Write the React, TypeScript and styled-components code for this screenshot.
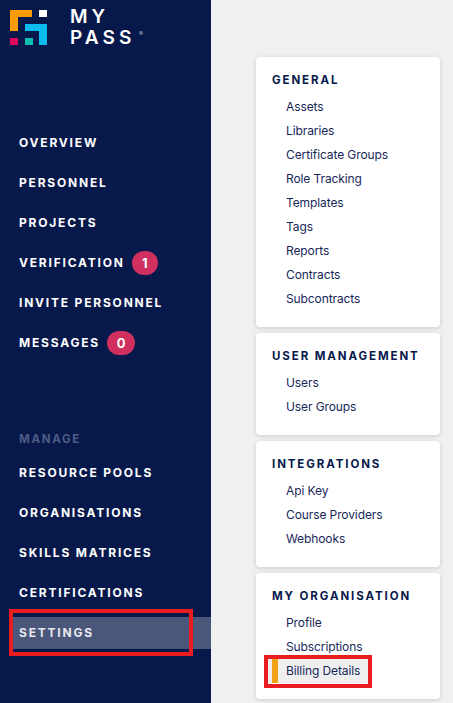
import React from "react";
import styled, { createGlobalStyle } from "styled-components";

const Global = createGlobalStyle`
  html, body { margin: 0; padding: 0; height: 100%; overflow: hidden; background: #f0f0f0; }
  #root { height: 100%; }
`;
const Page = styled.div`
  display: flex; width: 453px; height: 703px; overflow: hidden; position: relative;
  font-family: Inter, "Liberation Sans", sans-serif;
`;
const Sidebar = styled.aside`
  width: 211px; flex: none; background: #07194b; display: flex; flex-direction: column;
`;
const Brand = styled.div`
  display: flex; gap: 23px; padding: 10px 0 0 10px; height: 113px; box-sizing: border-box;
`;
const Wordmark = styled.div`
  color: #fff; font-size: 19px; font-weight: 600; letter-spacing: 4.1px; line-height: 21px;
  margin-top: -4px; position: relative; width: 80px;
  sup { position: absolute; left: 69px; top: 25px; font-size: 6px; line-height: 6px; letter-spacing: 0; color: #9aa3bb; }
`;
const NavGroup = styled.nav<{ $flush?: boolean }>`
  display: flex; flex-direction: column; padding-top: ${(p) => (p.$flush ? 0 : 10)}px;
`;
const NavItem = styled.div<{ $active?: boolean }>`
  height: 40px; box-sizing: border-box; padding: 0 0 1px 19px; display: flex; align-items: center; gap: 7px;
  color: #fff; font-size: 12px; font-weight: 700; letter-spacing: 1.8px; white-space: nowrap;
  position: relative;
  ${(p) => p.$active && `
    color: #e6e8ee;
    &::before { content: ""; position: absolute; left: 13px; right: 0; top: 4px; bottom: 4px; background: rgba(255,255,255,.27); }
    span { position: relative; }
  `}
`;
const Badge = styled.b<{ $wide?: boolean }>`
  background: #cf305f; color: #fff; border-radius: 12px; height: 24px; width: ${(p) => (p.$wide ? 28 : 26)}px;
  display: flex; align-items: center; justify-content: center; font-size: 13px; letter-spacing: 0; font-weight: 700;
`;
const ManageLabel = styled.div`
  margin-top: 69px; margin-bottom: 7px; padding-left: 19px; line-height: 14px;
  color: #4e5c85; font-size: 11.5px; font-weight: 700; letter-spacing: 1.7px;
`;
const Main = styled.main`
  flex: 1; display: flex; flex-direction: column; padding: 57px 0 0 45px; gap: 6px;
`;
const Card = styled.section`
  width: 184px; box-sizing: border-box; background: #fff; border-radius: 4px;
  box-shadow: 0 1px 4px rgba(0,0,0,.16); padding: 16px 0 16px 16px; flex: none;
`;
const CardTitle = styled.h3`
  margin: 0 0 8px; color: #07194b; font-size: 11.5px; line-height: 14px; font-weight: 700; letter-spacing: 1.9px; white-space: nowrap;
`;
const Link = styled.div<{ $active?: boolean }>`
  height: 24px; line-height: 24px; color: #17275a; font-size: 12px; letter-spacing: -0.1px; font-weight: 400; padding-left: 14px; position: relative; white-space: nowrap;
  ${(p) => p.$active && `
    background: #efefef; margin-left: -4px; padding-left: 18px; width: 100px; box-sizing: border-box;
    &::before { content: ""; position: absolute; left: 4px; top: 0; bottom: 0; width: 6px; background: #f2a114; }
  `}
`;
const Highlight = styled.div<{ $x: number; $y: number; $w: number; $h: number }>`
  position: absolute; left: ${(p) => p.$x}px; top: ${(p) => p.$y}px; width: ${(p) => p.$w}px; height: ${(p) => p.$h}px;
  box-sizing: border-box; border: 4px solid #e91c1f; pointer-events: none;
`;

const Logo = () => (
  <svg width="37" height="35" viewBox="0 0 37 35" style={{ flex: "none" }}>
    <path d="M0 0H22V7H8V21H0Z" fill="#fd9c0a" />
    <rect x="29" y="0" width="8" height="7" fill="#fff" />
    <path d="M15 14H37V35H29V21H15Z" fill="#0dbcee" />
    <rect x="0" y="28" width="8" height="7" fill="#e0065e" />
    <rect x="15" y="28" width="8" height="7" fill="#0cc0b4" />
  </svg>
);

const top: [string, number?][] = [["OVERVIEW"], ["PERSONNEL"], ["PROJECTS"], ["VERIFICATION", 1], ["INVITE PERSONNEL"], ["MESSAGES", 0]];
const manage = ["RESOURCE POOLS", "ORGANISATIONS", "SKILLS MATRICES", "CERTIFICATIONS"];
const cards: { title: string; links: string[] }[] = [
  { title: "GENERAL", links: ["Assets", "Libraries", "Certificate Groups", "Role Tracking", "Templates", "Tags", "Reports", "Contracts", "Subcontracts"] },
  { title: "USER MANAGEMENT", links: ["Users", "User Groups"] },
  { title: "INTEGRATIONS", links: ["Api Key", "Course Providers", "Webhooks"] },
  { title: "MY ORGANISATION", links: ["Profile", "Subscriptions", "Billing Details"] },
];

export default function App() {
  return (
    <Page>
      <Global />
      <Sidebar>
        <Brand>
          <Logo />
          <Wordmark>MY<br />PASS<sup>®</sup></Wordmark>
        </Brand>
        <NavGroup>
          {top.map(([t, b]) => (
            <NavItem key={t}><span>{t}</span>{b !== undefined && <Badge $wide={b === 0}>{b}</Badge>}</NavItem>
          ))}
        </NavGroup>
        <ManageLabel>MANAGE</ManageLabel>
        <NavGroup $flush>
          {manage.map((t) => <NavItem key={t}><span>{t}</span></NavItem>)}
          <NavItem $active><span>SETTINGS</span></NavItem>
        </NavGroup>
      </Sidebar>
      <Main>
        {cards.map((c) => (
          <Card key={c.title}>
            <CardTitle>{c.title}</CardTitle>
            {c.links.map((l) => <Link key={l} $active={l === "Billing Details"}>{l}</Link>)}
          </Card>
        ))}
      </Main>
      <Highlight $x={9} $y={609} $w={184} $h={47} />
      <Highlight $x={264} $y={655} $w={108} $h={33} />
    </Page>
  );
}
